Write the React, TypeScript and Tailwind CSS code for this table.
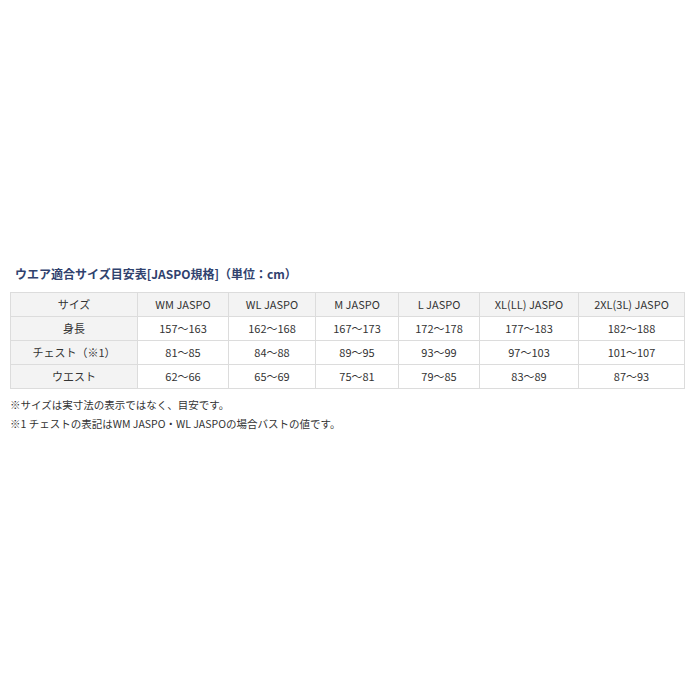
import React from "react";

const cols = ["WM JASPO", "WL JASPO", "M JASPO", "L JASPO", "XL(LL) JASPO", "2XL(3L) JASPO"];
const widths = ["w-[127px]", "w-[91px]", "w-[87px]", "w-[83px]", "w-[81px]", "w-[99px]", "w-[106px]"];
const rows: [string, string[]][] = [
  ["身長", ["157～163", "162～168", "167～173", "172～178", "177～183", "182～188"]],
  ["チェスト（※1）", ["81～85", "84～88", "89～95", "93～99", "97～103", "101～107"]],
  ["ウエスト", ["62～66", "65～69", "75～81", "79～85", "83～89", "87～93"]],
];

export default function App() {
  return (
    <div
      className="w-[700px] h-[700px] bg-white text-[#333] pt-[265px] pl-[10px]"
      style={{ fontFamily: '"Noto Sans CJK JP", "Noto Sans", sans-serif' }}
    >
      <div className="pl-[5px] text-[12px] font-bold leading-[18px] text-[#30426e]">
        ウエア適合サイズ目安表[JASPO規格]（単位：cm）
      </div>
      <table className="mt-[9px] border-collapse text-[11px] text-[#333]">
        <tbody>
          <tr className="bg-[#f3f3f3]">
            <td className={`${widths[0]} h-[24px] border border-[#dcdcdc] text-center p-0`}>サイズ</td>
            {cols.map((c, i) => (
              <td key={c} className={`${widths[i + 1]} h-[24px] border border-[#dcdcdc] text-center p-0`}>
                {c}
              </td>
            ))}
          </tr>
          {rows.map(([label, vals]) => (
            <tr key={label}>
              <td className="h-[24px] border border-[#dcdcdc] bg-[#f3f3f3] text-center p-0">{label}</td>
              {vals.map((v, i) => (
                <td key={i} className="h-[24px] border border-[#dcdcdc] bg-white text-center p-0">
                  {v}
                </td>
              ))}
            </tr>
          ))}
        </tbody>
      </table>
      <div className="mt-[6px] text-[10.5px] leading-[19px] text-[#333]">
        <div>※サイズは実寸法の表示ではなく、目安です。</div>
        <div>※1 チェストの表記はWM JASPO・WL JASPOの場合バストの値です。</div>
      </div>
    </div>
  );
}
